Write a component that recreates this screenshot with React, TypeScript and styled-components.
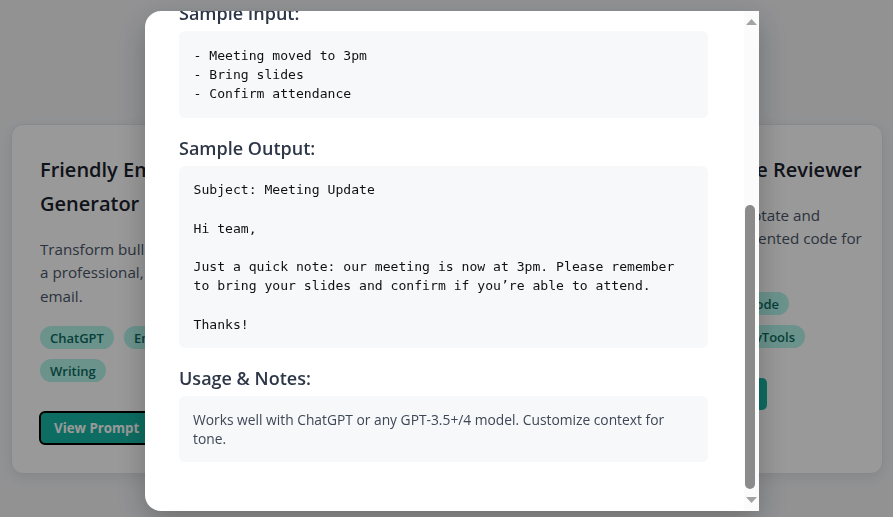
import React, { useLayoutEffect, useRef, useState } from "react";
import styled, { createGlobalStyle } from "styled-components";

const GlobalStyle = createGlobalStyle`
  html, body { margin: 0; padding: 0; }
  body {
    background: #f3f4f6;
    font-family: "Open Sans", "Noto Sans", sans-serif;
    overflow: hidden;
  }
  * { box-sizing: border-box; }
`;

const Page = styled.div`
  width: 893px;
  height: 517px;
  padding: 124px 10px 0 11px;
`;

const Grid = styled.div`
  display: grid;
  grid-template-columns: repeat(3, 1fr);
  gap: 48px;
`;

const Card = styled.div`
  background: #ffffff;
  border: 1px solid #e2e5ea;
  border-radius: 12px;
  box-shadow: 0 4px 14px rgba(0, 0, 0, 0.08);
  padding: 28px 19px 29px 28px;
  display: flex;
  flex-direction: column;
`;

const CardTitle = styled.h3`
  margin: 0 0 16.5px;
  font-size: 20px;
  line-height: 34px;
  font-weight: 600;
  color: #1a202c;
`;

const CardDesc = styled.p`
  margin: 0 0 18px;
  font-size: 15.2px;
  line-height: 23.5px;
  color: #4a5568;
`;

const Tags = styled.div`
  display: flex;
  flex-wrap: wrap;
  gap: 10px;
  margin-bottom: 30px;
`;

const Tag = styled.span`
  display: inline-flex;
  align-items: center;
  height: 23px;
  padding: 0 10px;
  border-radius: 999px;
  background: #b2f5ea;
  color: #0b6b5f;
  font-size: 13px;
  font-weight: 600;
`;

const ViewButton = styled.button<{ $focused?: boolean }>`
  align-self: flex-start;
  height: 32px;
  padding: 0 14px;
  border: none;
  border-radius: 5px;
  background: #17b6a3;
  color: #ffffff;
  font-family: inherit;
  font-size: 13.3px;
  font-weight: 700;
  outline: ${(p) => (p.$focused ? "2px solid #000" : "none")};
  outline-offset: -1px;
`;

const Overlay = styled.div`
  position: fixed;
  inset: 0;
  background: rgba(0, 0, 0, 0.4);
  display: flex;
  align-items: center;
  justify-content: center;
  padding: 5px 0 0 11px;
`;

const Modal = styled.div`
  width: 614px;
  height: 500px;
  background: #ffffff;
  border-radius: 16px 0 0 16px;
  box-shadow: 0 10px 30px rgba(0, 0, 0, 0.25);
  overflow: hidden;
  display: flex;
`;

const Viewport = styled.div`
  position: relative;
  flex: 1;
  min-width: 0;
  overflow: hidden;
  padding: 32px 36px 61px 34px;
`;

const ScrollBar = styled.div`
  width: 15px;
  flex-shrink: 0;
  background: #fbfbfb;
  display: flex;
  flex-direction: column;
`;

const ArrowButton = styled.div<{ $offset: number }>`
  height: 15px;
  display: flex;
  align-items: flex-start;
  justify-content: center;
  padding: ${(p) => p.$offset}px 1px 0 0;
`;

const Track = styled.div`
  flex: 1;
  display: flex;
  flex-direction: column;
`;

const Thumb = styled.div`
  width: 10px;
  margin-left: 1px;
  border-radius: 5px;
  background: #8b8b8b;
`;

const ModalTitle = styled.h2`
  margin: 0 0 10px;
  font-size: 24px;
  line-height: 32px;
  font-weight: 600;
  color: #1a202c;
`;

const ModalDesc = styled.p`
  margin: 0 0 18px;
  font-size: 14px;
  line-height: 22px;
  color: #4a5568;
`;

const Section = styled.section`
  margin-bottom: 18px;
  &:last-child { margin-bottom: 0; }
`;

const SectionHeading = styled.h4`
  margin: 0 0 6px;
  font-size: 18px;
  line-height: 24px;
  font-weight: 600;
  color: #2d3748;
`;

const CodeBlock = styled.pre`
  margin: 0;
  padding: 14.5px;
  background: #f7f8fa;
  border-radius: 6px;
  font-family: "DejaVu Sans Mono", "Liberation Mono", monospace;
  font-size: 13.1px;
  line-height: 19.2px;
  color: #111111;
  white-space: pre-wrap;
`;

const NoteBlock = styled.div`
  padding: 14px;
  background: #f7f8fa;
  border-radius: 6px;
  font-size: 13.8px;
  line-height: 19px;
  color: #3d4756;
`;

type CardData = {
  title: string;
  desc: string;
  tags: string[];
  focused?: boolean;
};

const cards: CardData[] = [
  {
    title: "Friendly Email Generator",
    desc: "Transform bullet points into a professional, friendly team email.",
    tags: ["ChatGPT", "Email", "Writing"],
    focused: true,
  },
  {
    title: "Meeting Notes Summarizer",
    desc: "Turn raw meeting transcripts into crisp summaries and actions.",
    tags: ["Claude", "Notes", "Summaries"],
  },
  {
    title: "Redux Code Reviewer",
    desc: "Optimize, annotate and refactor commented code for readability.",
    tags: ["ChatGPT", "Code", "Python", "DevTools"],
  },
];

const promptText = `You are a helpful assistant. Write a friendly, professional
email based on the bullet points below. Keep it concise,
warm and clear. Include a subject line, a short greeting
and a sign-off.

Bullet points: {{bullets}}`;

const inputText = `- Meeting moved to 3pm
- Bring slides
- Confirm attendance`;

const outputText = `Subject: Meeting Update

Hi team,

Just a quick note: our meeting is now at 3pm. Please remember
to bring your slides and confirm if you’re able to attend.

Thanks!`;

const UpArrow = () => (
  <svg width="11" height="6" viewBox="0 0 11 6">
    <polygon points="5.5,0 11,6 0,6" fill="#a3a3a3" />
  </svg>
);

const DownArrow = () => (
  <svg width="11" height="6" viewBox="0 0 11 6">
    <polygon points="0,0 11,0 5.5,6" fill="#a3a3a3" />
  </svg>
);

export default function App() {
  const viewRef = useRef<HTMLDivElement>(null);
  const inputRef = useRef<HTMLPreElement>(null);
  const trackRef = useRef<HTMLDivElement>(null);
  const [thumb, setThumb] = useState({ top: 0, height: 0 });

  useLayoutEffect(() => {
    const view = viewRef.current;
    const input = inputRef.current;
    const track = trackRef.current;
    if (!view || !input || !track) return;
    view.scrollTop = input.offsetTop - 20;
    const trackH = track.clientHeight;
    const ratio = view.clientHeight / view.scrollHeight;
    const height = Math.round(trackH * ratio);
    const maxScroll = view.scrollHeight - view.clientHeight;
    const top = maxScroll > 0 ? ((trackH - height) * view.scrollTop) / maxScroll : 0;
    setThumb({ top, height });
  }, []);

  return (
    <>
      <GlobalStyle />
      <Page>
        <Grid>
          {cards.map((c) => (
            <Card key={c.title}>
              <CardTitle>{c.title}</CardTitle>
              <CardDesc>{c.desc}</CardDesc>
              <Tags>
                {c.tags.map((t) => (
                  <Tag key={t}>{t}</Tag>
                ))}
              </Tags>
              <ViewButton $focused={c.focused}>View Prompt</ViewButton>
            </Card>
          ))}
        </Grid>
      </Page>
      <Overlay>
        <Modal>
          <Viewport ref={viewRef}>
            <ModalTitle>Friendly Email Generator</ModalTitle>
            <ModalDesc>
              Transform bullet points into a professional, friendly email.
            </ModalDesc>
            <Section>
              <SectionHeading>Prompt:</SectionHeading>
              <CodeBlock>{promptText}</CodeBlock>
            </Section>
            <Section>
              <SectionHeading>Sample Input:</SectionHeading>
              <CodeBlock ref={inputRef}>{inputText}</CodeBlock>
            </Section>
            <Section>
              <SectionHeading>Sample Output:</SectionHeading>
              <CodeBlock>{outputText}</CodeBlock>
            </Section>
            <Section>
              <SectionHeading>Usage &amp; Notes:</SectionHeading>
              <NoteBlock>
                Works well with ChatGPT or any GPT-3.5+/4 model. Customize
                context for tone.
              </NoteBlock>
            </Section>
          </Viewport>
          <ScrollBar>
            <ArrowButton $offset={8}>
              <UpArrow />
            </ArrowButton>
            <Track ref={trackRef}>
              <div style={{ height: thumb.top, flexShrink: 0 }} />
              <Thumb style={{ height: thumb.height }} />
            </Track>
            <ArrowButton $offset={1}>
              <DownArrow />
            </ArrowButton>
          </ScrollBar>
        </Modal>
      </Overlay>
    </>
  );
}
